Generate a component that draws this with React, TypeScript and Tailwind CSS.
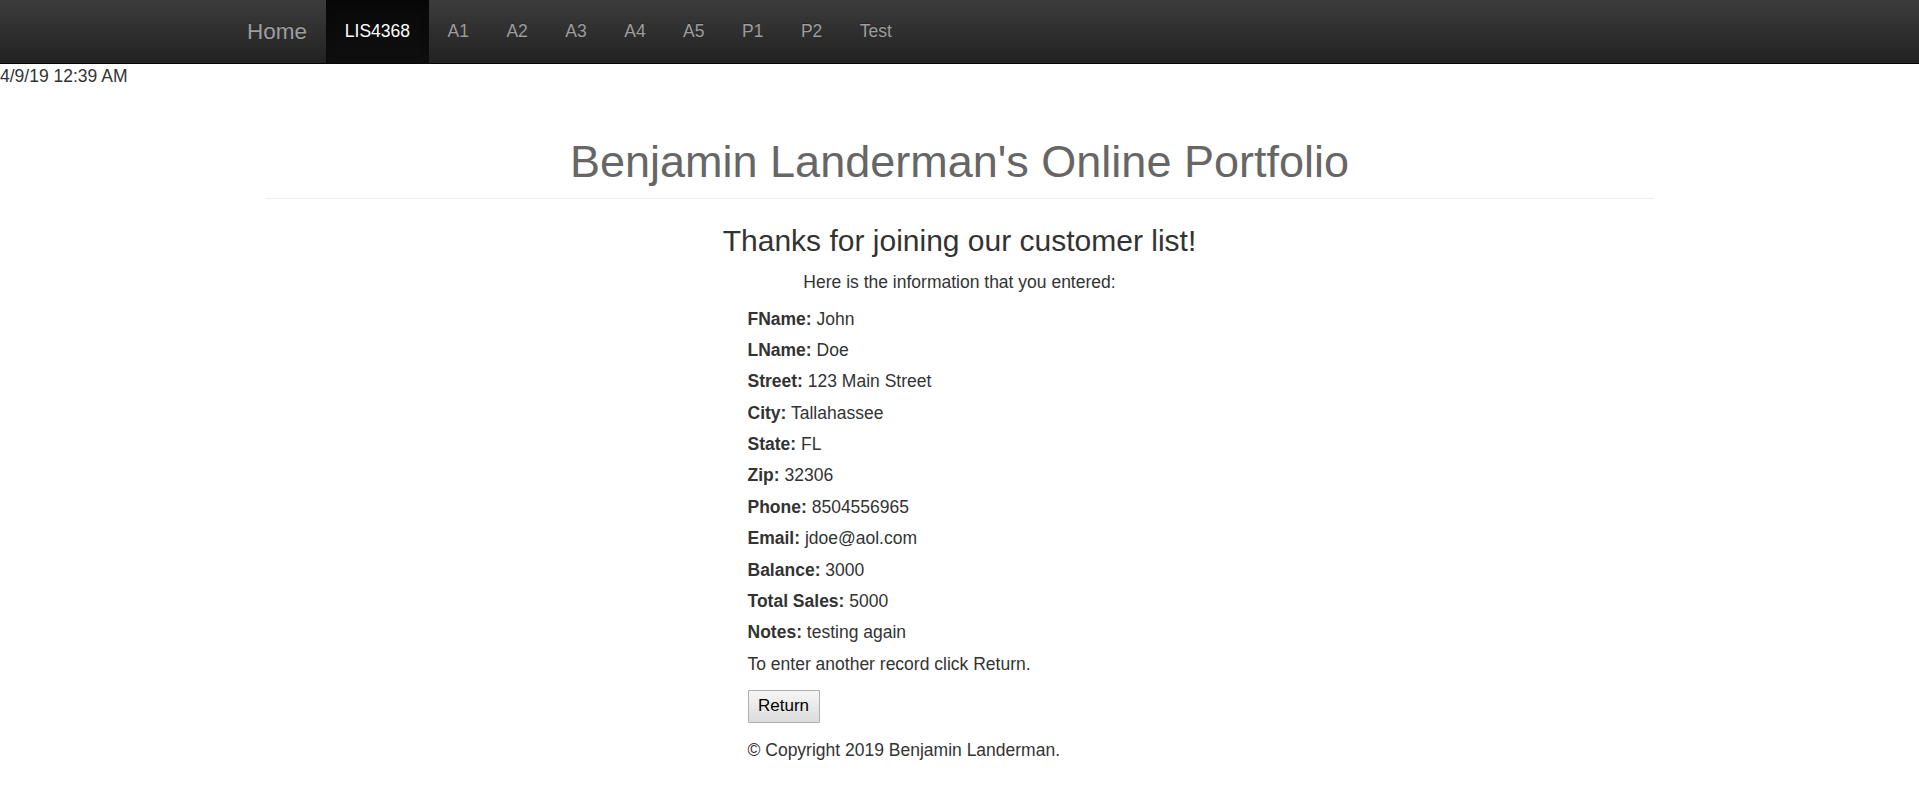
const navLinks = ['LIS4368', 'A1', 'A2', 'A3', 'A4', 'A5', 'P1', 'P2', 'Test'];

const customer: [string, string][] = [
  ['FName', 'John'],
  ['LName', 'Doe'],
  ['Street', '123 Main Street'],
  ['City', 'Tallahassee'],
  ['State', 'FL'],
  ['Zip', '32306'],
  ['Phone', '8504556965'],
  ['Email', 'jdoe@aol.com'],
  ['Balance', '3000'],
  ['Total Sales', '5000'],
  ['Notes', 'testing again'],
];

function Navbar() {
  return (
    <nav className="h-[64px] border-b border-[#080808] bg-linear-to-b from-[#3c3c3c] to-[#222222]">
      <div className="mx-auto flex h-[63px] w-[1463px]">
        <a className="block px-[19px] py-[19px] text-[22.5px] leading-[25px] text-[#9d9d9d] [text-shadow:0_-1px_0_rgba(0,0,0,0.25)]">
          Home
        </a>
        <ul className="flex">
          {navLinks.map((label, i) => (
            <li key={label}>
              <a
                className={
                  i === 0
                    ? 'block h-[63px] bg-linear-to-b from-[#080808] to-[#0f0f0f] px-[18.75px] pt-[19px] text-[17.5px] leading-[25px] text-white shadow-[inset_0_3px_9px_rgba(0,0,0,0.25)] [text-shadow:0_-1px_0_rgba(0,0,0,0.25)]'
                    : 'block h-[63px] px-[18.75px] pt-[19px] text-[17.5px] leading-[25px] text-[#9d9d9d] [text-shadow:0_-1px_0_rgba(0,0,0,0.25)]'
                }
              >
                {label}
              </a>
            </li>
          ))}
        </ul>
      </div>
    </nav>
  );
}

export default function App() {
  return (
    <div className="min-h-screen bg-white font-['Liberation_Sans',Arial,sans-serif] text-[#333]">
      <Navbar />
      <div className="text-[17.5px] leading-[25px]">4/9/19 12:39 AM</div>

      <div className="mx-auto w-[1388px] border-b border-[#eeeeee] pb-[11.5px]">
        <h1 className="mt-[48px] text-center font-['Trebuchet_MS','Liberation_Sans',sans-serif] text-[45px] leading-[49.5px] text-[#666]">
          Benjamin Landerman's Online Portfolio
        </h1>
      </div>

      <h3 className="mt-[25px] text-center text-[30px] leading-[33px]">Thanks for joining our customer list!</h3>
      <p className="mt-[13px] text-center text-[17.5px] leading-[25px]">Here is the information that you entered:</p>

      <div className="mx-auto mt-[11.5px] w-[424px] text-[17.5px] leading-[25px]">
        <div className="flex flex-col gap-[6.4px]">
          {customer.map(([label, value]) => (
            <div key={label}>
              <b className="font-bold">{label}:</b> {value}
            </div>
          ))}
          <div>To enter another record click Return.</div>
        </div>
        <button className="mt-[12.75px] h-[33px] rounded-[1px] border border-[#adadad] bg-linear-to-b from-[#f6f6f6] to-[#dcdcdc] px-[9.5px] text-[17px] leading-[20px] text-black">
          Return
        </button>
        <p className="mt-[15.5px]">© Copyright 2019 Benjamin Landerman.</p>
      </div>
    </div>
  );
}
